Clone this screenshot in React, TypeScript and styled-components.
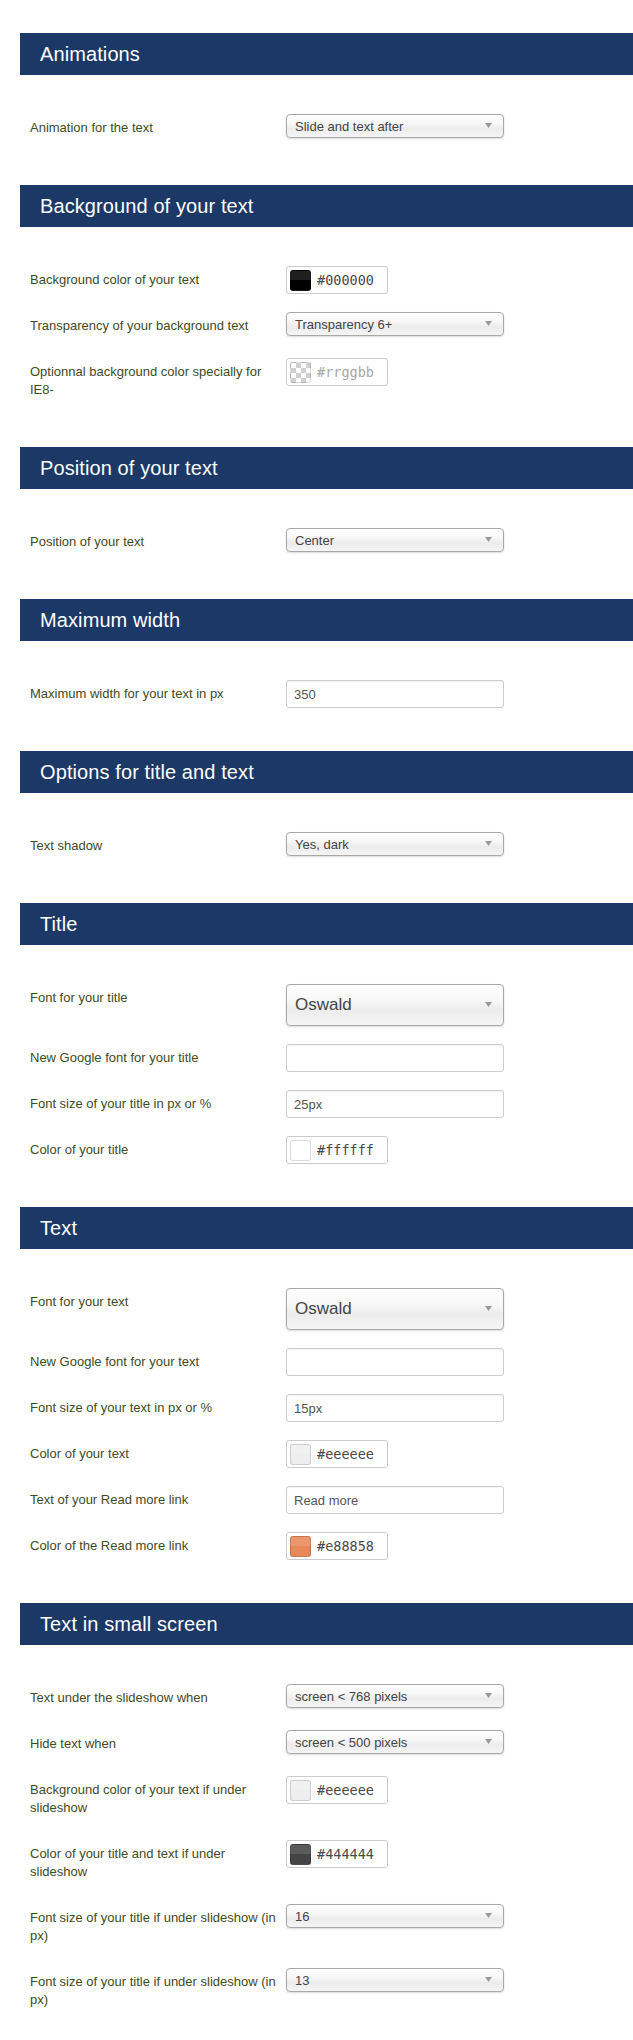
import React from "react";
import styled, { createGlobalStyle } from "styled-components";

const GlobalStyle = createGlobalStyle`
  html, body { margin: 0; padding: 0; background: #ffffff; }
  body { font-family: "Liberation Sans", Arial, Helvetica, sans-serif; }
  * { box-sizing: border-box; }
`;

type Row =
  | { kind: "select"; label: string; value: string; big?: boolean }
  | { kind: "input"; label: string; value: string }
  | { kind: "color"; label: string; value: string; swatch?: string };

type Section = { title: string; rows: Row[] };

const sections: Section[] = [
  {
    title: "Animations",
    rows: [{ kind: "select", label: "Animation for the text", value: "Slide and text after" }],
  },
  {
    title: "Background of your text",
    rows: [
      { kind: "color", label: "Background color of your text", value: "#000000", swatch: "#000000" },
      { kind: "select", label: "Transparency of your background text", value: "Transparency 6+" },
      { kind: "color", label: "Optionnal background color specially for IE8-", value: "#rrggbb" },
    ],
  },
  {
    title: "Position of your text",
    rows: [{ kind: "select", label: "Position of your text", value: "Center" }],
  },
  {
    title: "Maximum width",
    rows: [{ kind: "input", label: "Maximum width for your text in px", value: "350" }],
  },
  {
    title: "Options for title and text",
    rows: [{ kind: "select", label: "Text shadow", value: "Yes, dark" }],
  },
  {
    title: "Title",
    rows: [
      { kind: "select", label: "Font for your title", value: "Oswald", big: true },
      { kind: "input", label: "New Google font for your title", value: "" },
      { kind: "input", label: "Font size of your title in px or %", value: "25px" },
      { kind: "color", label: "Color of your title", value: "#ffffff", swatch: "#ffffff" },
    ],
  },
  {
    title: "Text",
    rows: [
      { kind: "select", label: "Font for your text", value: "Oswald", big: true },
      { kind: "input", label: "New Google font for your text", value: "" },
      { kind: "input", label: "Font size of your text in px or %", value: "15px" },
      { kind: "color", label: "Color of your text", value: "#eeeeee", swatch: "#eeeeee" },
      { kind: "input", label: "Text of your Read more link", value: "Read more" },
      { kind: "color", label: "Color of the Read more link", value: "#e88858", swatch: "#e88858" },
    ],
  },
  {
    title: "Text in small screen",
    rows: [
      { kind: "select", label: "Text under the slideshow when", value: "screen < 768 pixels" },
      { kind: "select", label: "Hide text when", value: "screen < 500 pixels" },
      { kind: "color", label: "Background color of your text if under slideshow", value: "#eeeeee", swatch: "#eeeeee" },
      { kind: "color", label: "Color of your title and text if under slideshow", value: "#444444", swatch: "#444444" },
      { kind: "select", label: "Font size of your title if under slideshow (in px)", value: "16" },
      { kind: "select", label: "Font size of your title if under slideshow (in px)", value: "13" },
    ],
  },
];

const Page = styled.div`
  padding: 33px 0 10px 20px;
`;

const SectionBlock = styled.section`
  display: flow-root;
  padding-bottom: 25px;
`;

const Banner = styled.h2`
  margin: 0 0 39px;
  height: 42px;
  display: flex;
  align-items: center;
  padding-left: 20px;
  background: #1c3867;
  color: #ffffff;
  font-size: 20px;
  font-weight: normal;
  letter-spacing: 0.1px;
`;

const FieldRow = styled.div`
  display: grid;
  grid-template-columns: 256px auto;
  align-items: start;
  padding-left: 10px;
  margin-bottom: 18px;
`;

const Label = styled.label`
  font-size: 13px;
  line-height: 18px;
  padding: 5px 4px 5px 0;
  color: #414c1e;
`;

const SelectBox = styled.div<{ $big?: boolean }>`
  width: 218px;
  height: ${(p) => (p.$big ? "42px" : "24px")};
  display: flex;
  align-items: center;
  justify-content: space-between;
  padding: 0 11px 0 8px;
  border: 1px solid #a8a8a8;
  border-radius: 4px;
  background: linear-gradient(to bottom, #ffffff 0%, #f7f7f7 40%, #ececec 62%, #f5f5f5 100%);
  box-shadow: 0 1px 2px rgba(0, 0, 0, 0.15);
  color: #444444;
  font-size: ${(p) => (p.$big ? "17px" : "13px")};
  cursor: default;
`;

const Arrow = styled.svg`
  flex: none;
  margin-bottom: 2px;
`;

const TextField = styled.input`
  width: 218px;
  height: 28px;
  margin: 0;
  padding: 0 7px;
  border: 1px solid #cccccc;
  border-radius: 3px;
  box-shadow: inset 0 1px 1px rgba(0, 0, 0, 0.05);
  font-family: "Liberation Sans", Arial, sans-serif;
  font-size: 13px;
  color: #555555;
  background: #ffffff;
  outline: none;
`;

const ColorField = styled.div`
  width: 102px;
  height: 28px;
  display: flex;
  align-items: center;
  gap: 6px;
  padding: 0 3px;
  border: 1px solid #cccccc;
  border-radius: 3px;
  background: #ffffff;
`;

const Swatch = styled.span<{ $color?: string }>`
  width: 21px;
  height: 21px;
  flex: none;
  border-radius: 3px;
  border: 1px solid rgba(0, 0, 0, 0.14);
  ${(p) =>
    p.$color
      ? `background: linear-gradient(to bottom, rgba(255,255,255,0.12) 0 45%, rgba(0,0,0,0) 45% 100%), ${p.$color};`
      : `background-color: #ffffff;
         background-image: conic-gradient(#d0d0d0 25%, #ffffff 0 50%, #d0d0d0 0 75%, #ffffff 0);
         background-size: 10px 10px;`}
`;

const ColorText = styled.span<{ $placeholder?: boolean }>`
  font-family: "DejaVu Sans Mono", "Liberation Mono", monospace;
  font-size: 13.5px;
  color: ${(p) => (p.$placeholder ? "#a8a8a8" : "#4a4a4a")};
`;

function Control({ row }: { row: Row }) {
  if (row.kind === "select") {
    return (
      <SelectBox $big={row.big}>
        <span>{row.value}</span>
        <Arrow width="7" height="5" viewBox="0 0 7 5">
          <path d="M0 0 L7 0 L3.5 5 Z" fill="#9a9a9a" />
        </Arrow>
      </SelectBox>
    );
  }
  if (row.kind === "input") {
    return <TextField type="text" readOnly value={row.value} />;
  }
  return (
    <ColorField>
      <Swatch $color={row.swatch} />
      <ColorText $placeholder={!row.swatch}>{row.value}</ColorText>
    </ColorField>
  );
}

export default function App() {
  return (
    <>
      <GlobalStyle />
      <Page>
        {sections.map((s) => (
          <SectionBlock key={s.title}>
            <Banner>{s.title}</Banner>
            {s.rows.map((r, i) => (
              <FieldRow key={i}>
                <Label>{r.label}</Label>
                <Control row={r} />
              </FieldRow>
            ))}
          </SectionBlock>
        ))}
      </Page>
    </>
  );
}
